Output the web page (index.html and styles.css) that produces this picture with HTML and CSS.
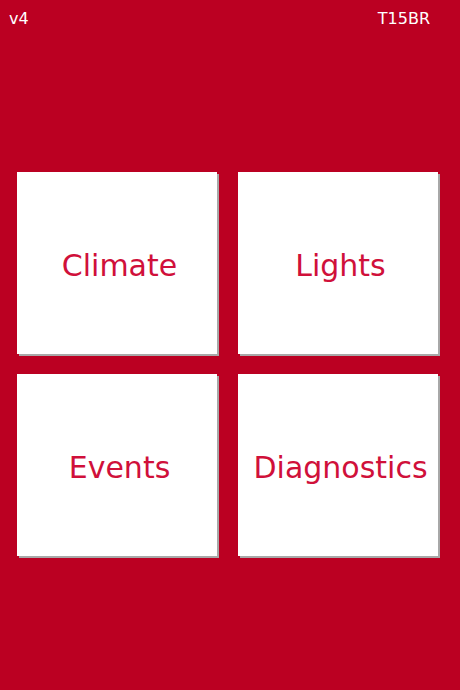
FILE: index.html
```html
<!DOCTYPE html>
<html lang="en">
<head>
  <meta charset="UTF-8">
  <meta name="viewport" content="width=device-width, initial-scale=1.0">
  <title>Home</title>
  <link rel="stylesheet" href="styles.css">
</head>
<body>
  <div class="topbar">
    <span class="version">v4</span>
    <span class="unit">T15BR</span>
  </div>

  <!-- Main menu -->
  <div class="menu">
    <button class="tile">Climate</button>
    <button class="tile">Lights</button>
    <button class="tile">Events</button>
    <button class="tile">Diagnostics</button>
  </div>
</body>
</html>
```

FILE: styles.css
```css
* {
  margin: 0;
  padding: 0;
  box-sizing: border-box;
  font-family: "DejaVu Sans", sans-serif;
}
body {
  background: #bb0022;
  color: #fff;
  width: 460px;
  height: 690px;
}
.topbar {
  display: flex;
  justify-content: space-between;
  padding: 9px 30px 0 9px;
  font-size: 16px;
  height: 172px;
}
.menu {
  display: grid;
  grid-template-columns: 200px 200px;
  grid-auto-rows: 182px;
  column-gap: 21px;
  row-gap: 20px;
  padding-left: 17px;
}
.tile {
  background: #fff;
  border: none;
  box-shadow: 2px 2px 0 #a8a8a8;
  color: #d0103a;
  font-size: 30px;
  cursor: pointer;
  display: flex;
  align-items: center;
  justify-content: center;
  padding: 4px 0 0 5px;
}
```
